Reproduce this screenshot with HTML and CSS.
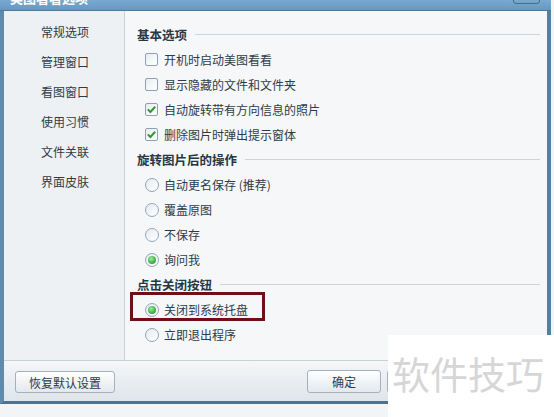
FILE: index.html
```html
<!DOCTYPE html>
<html lang="zh">
<head>
<meta charset="utf-8">
<title>美图看看选项</title>
<link rel="stylesheet" href="styles.css">
</head>
<body>
<div class="window">
  <div class="titlebar">
    <span class="title">美图看看选项</span>
    <span class="close-btn"></span>
  </div>
  <div class="body">
    <ul class="sidebar">
      <li>常规选项</li>
      <li>管理窗口</li>
      <li>看图窗口</li>
      <li>使用习惯</li>
      <li>文件关联</li>
      <li>界面皮肤</li>
    </ul>
    <div class="main">
      <div class="section-head"><span>基本选项</span><i class="rule"></i></div>
      <label class="row"><span class="check"></span>开机时启动美图看看</label>
      <label class="row"><span class="check"></span>显示隐藏的文件和文件夹</label>
      <label class="row"><span class="check on"><svg viewBox="0 0 13 13" width="13" height="13"><path d="M2.8 6.4 L5.4 9 L10.2 3.8" fill="none" stroke="#2f9a34" stroke-width="2"/></svg></span>自动旋转带有方向信息的照片</label>
      <label class="row"><span class="check on"><svg viewBox="0 0 13 13" width="13" height="13"><path d="M2.8 6.4 L5.4 9 L10.2 3.8" fill="none" stroke="#2f9a34" stroke-width="2"/></svg></span>删除图片时弹出提示窗体</label>

      <div class="section-head"><span>旋转图片后的操作</span><i class="rule"></i></div>
      <label class="row"><span class="radio"></span>自动更名保存 (推荐)</label>
      <label class="row"><span class="radio"></span>覆盖原图</label>
      <label class="row"><span class="radio"></span>不保存</label>
      <label class="row"><span class="radio on"></span>询问我</label>

      <div class="section-head"><span>点击关闭按钮</span><i class="rule"></i></div>
      <label class="row highlighted"><span class="radio on"></span>关闭到系统托盘<span class="mark"></span></label>
      <label class="row"><span class="radio"></span>立即退出程序</label>
    </div>
  </div>
  <div class="footer">
    <button class="btn wide">恢复默认设置</button>
    <div class="actions">
      <button class="btn">确定</button>
      <button class="btn" aria-label="取消"></button>
      <button class="btn" aria-label="应用"></button>
    </div>
  </div>
</div>
<div class="watermark">软件技巧</div>
</body>
</html>
```
FILE: styles.css
```css
html, body {
  margin: 0;
  padding: 0;
}
body {
  position: relative;
  width: 554px;
  height: 417px;
  overflow: hidden;
  background: #f3f4f5;
  font-family: "Noto Sans CJK SC", "Noto Sans", sans-serif;
  font-size: 12px;
  color: #2e3b47;
}
.window {
  width: 551px;
  height: 404px;
  box-sizing: border-box;
  border-left: 4px solid #5d8aad;
  border-right: 4px solid #557f9f;
  border-bottom: 3px solid #4f7290;
  display: flex;
  flex-direction: column;
  background: #f5f7f9;
}
.titlebar {
  position: relative;
  height: 11px;
  flex: none;
  background: linear-gradient(#7aa9cf, #6598c0);
  border-bottom: 1px solid #4f7896;
  box-sizing: border-box;
  margin-left: -4px;
  margin-right: -4px;
  overflow: hidden;
}
.title {
  display: block;
  margin-top: -10px;
  margin-left: 10px;
  line-height: 15px;
  font-size: 13px;
  font-weight: bold;
  color: #ffffff;
}
.close-btn {
  position: absolute;
  left: 513px;
  top: -5px;
  width: 27px;
  height: 9px;
  box-sizing: border-box;
  border: 1px solid #466c8b;
  border-radius: 3px;
  background: linear-gradient(#86b2d4, #72a2c8);
}
.body {
  flex: 1;
  display: flex;
  border-bottom: 1px solid #c9d1d8;
}
.sidebar {
  list-style: none;
  margin: 0;
  padding: 6px 0 0 37px;
  width: 121px;
  box-sizing: border-box;
  background: #edf1f4;
  border-right: 1px solid #c8d0d8;
  flex: none;
}
.sidebar li {
  height: 30px;
  line-height: 30px;
  color: #2e3b47;
}
.main {
  flex: 1;
  padding: 11px 7px 0 12px;
  background: #f5f7f9;
}
.section-head {
  display: flex;
  align-items: center;
  height: 25px;
  font-weight: bold;
  font-size: 12.5px;
  color: #283744;
}
.section-head .rule {
  flex: 1;
  height: 1px;
  margin-left: 8px;
  background: #cdd5dc;
}
.row {
  position: relative;
  display: flex;
  align-items: center;
  height: 25px;
  padding-left: 8px;
  color: #2e3b47;
}
.check {
  width: 13px;
  height: 13px;
  box-sizing: border-box;
  border: 1px solid #8ea0b4;
  border-radius: 2px;
  background: linear-gradient(135deg, #e9edf1, #ffffff);
  margin-right: 6px;
  display: flex;
  align-items: center;
  justify-content: center;
  flex: none;
}
.check svg {
  display: block;
  margin: -1px;
}
.radio {
  width: 14px;
  height: 14px;
  box-sizing: border-box;
  border: 1px solid #93a6ba;
  border-radius: 50%;
  background: linear-gradient(135deg, #e6ebf0, #ffffff);
  margin-right: 5px;
  flex: none;
  display: flex;
  align-items: center;
  justify-content: center;
}
.radio.on::after {
  content: "";
  width: 8px;
  height: 8px;
  border-radius: 50%;
  background: radial-gradient(circle at 40% 35%, #9cec9a, #3fb049 60%, #2a8f35);
}
.mark {
  position: absolute;
  left: -7px;
  top: -5px;
  width: 135px;
  height: 29px;
  box-sizing: border-box;
  border: 3px solid #6d1114;
}
.footer {
  height: 40px;
  flex: none;
  display: flex;
  align-items: flex-start;
  justify-content: space-between;
  padding: 9px 6px 0 11px;
  box-sizing: border-box;
  background: linear-gradient(#f4f6f8, #dfe5ea);
}
.actions {
  display: flex;
  gap: 6px;
}
.btn {
  height: 23px;
  width: 74px;
  padding: 0;
  font-family: inherit;
  font-size: 12px;
  color: #2e3b47;
  border: 1px solid #a5b0bb;
  border-radius: 3px;
  background: linear-gradient(#ffffff, #e3e8ec);
}
.btn.wide {
  width: 100px;
  height: 22px;
  margin-top: 1px;
}
.watermark {
  position: absolute;
  left: 388px;
  top: 335px;
  width: 166px;
  height: 82px;
  background: #ffffff;
  color: #d6d6d6;
  font-size: 38px;
  line-height: 76px;
  padding-left: 4px;
  box-sizing: border-box;
  white-space: nowrap;
}
```
